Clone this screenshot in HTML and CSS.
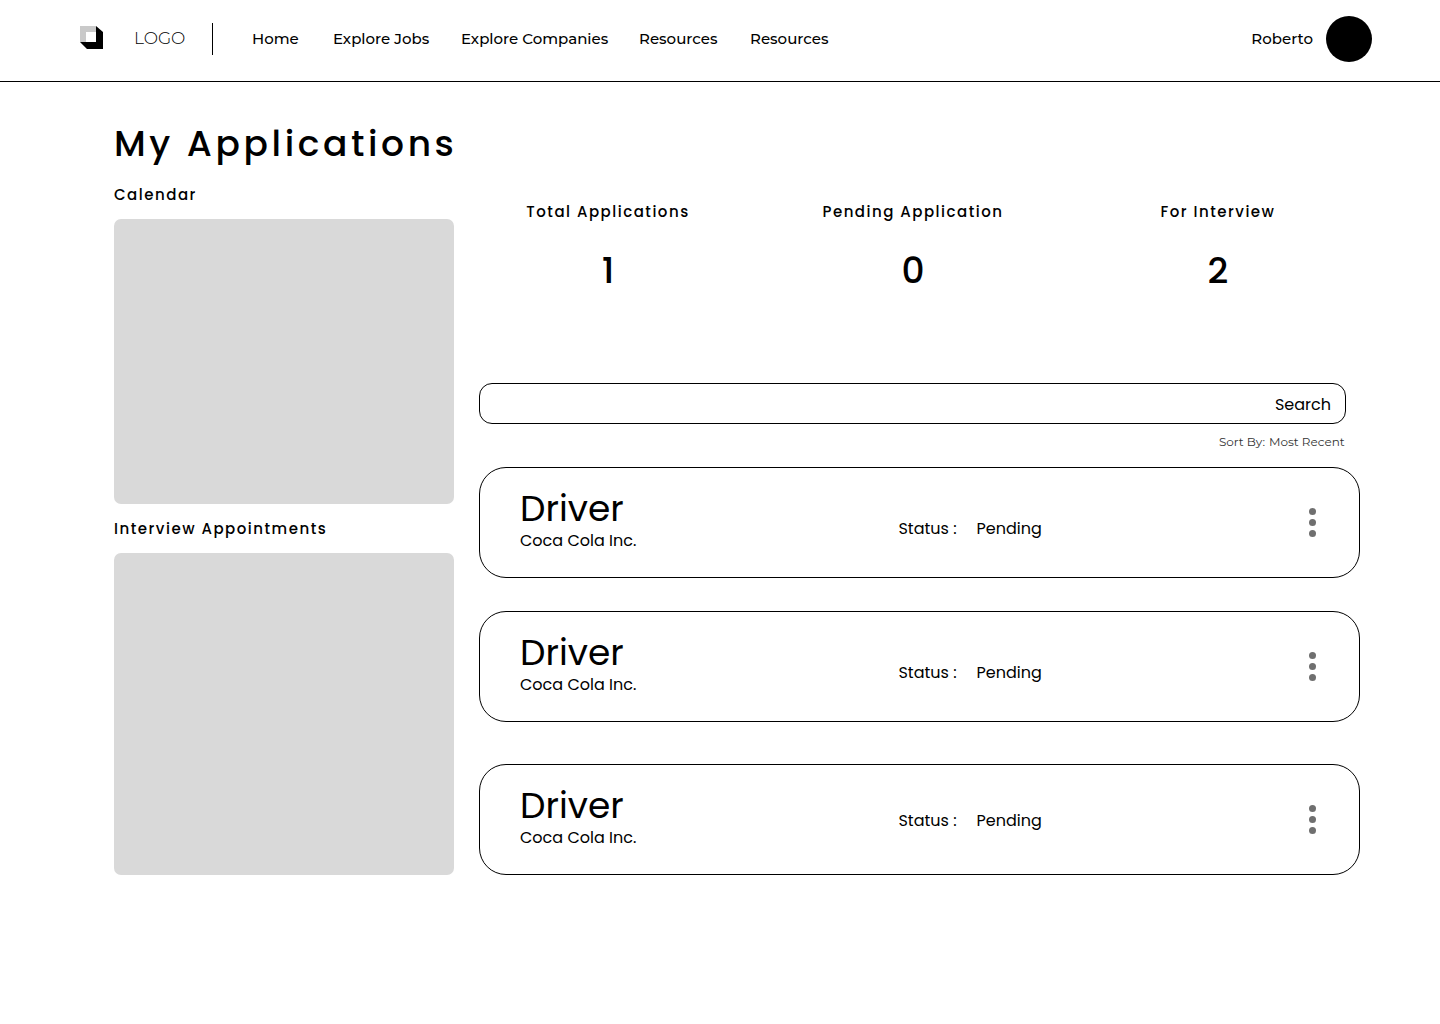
FILE: index.html
```html
<!DOCTYPE html>
<html lang="en">
<head>
<meta charset="utf-8">
<meta name="viewport" content="width=device-width, initial-scale=1">
<title>My Applications</title>
<link rel="stylesheet" href="styles.css">
</head>
<body>
<header class="topbar">
  <a class="brand" href="#">
    <svg class="brand-mark" viewBox="0 0 23 23" width="23" height="23" aria-hidden="true">
      <path fill="#c9c9c9" d="M0 0h16v6H6v10H0z"/>
      <path fill="#000" fill-rule="evenodd" d="M16 0l7 6v17H7l-7-7h16z"/>
    </svg>
    <span class="brand-name">LOGO</span>
  </a>
  <nav class="nav" aria-label="Main">
    <a href="#">Home</a>
    <a href="#">Explore Jobs</a>
    <a href="#">Explore Companies</a>
    <a href="#">Resources</a>
    <a href="#">Resources</a>
  </nav>
  <a class="user" href="#"><span>Roberto</span><span class="avatar"></span></a>
</header>
<main class="page">
  <h1 class="title">My Applications</h1>
  <div class="columns">
    <aside class="side">
      <h2 class="label">Calendar</h2>
      <div class="panel panel-calendar"></div>
      <h2 class="label">Interview Appointments</h2>
      <div class="panel panel-interviews"></div>
    </aside>
    <section class="content">
      <dl class="stats">
        <div class="stat"><dt class="label">Total Applications</dt><dd>1</dd></div>
        <div class="stat"><dt class="label">Pending Application</dt><dd>0</dd></div>
        <div class="stat"><dt class="label">For Interview</dt><dd>2</dd></div>
      </dl>
      <form class="search">
        <input class="search-input" type="search" aria-label="Search applications">
        <button class="search-button" type="submit">Search</button>
      </form>
      <div class="sort">
        <label for="sort">Sort By:</label>
        <select id="sort"><option>Most Recent</option></select>
      </div>
      <ul class="cards">
        <li class="card">
          <div class="role"><h3 class="job">Driver</h3><p class="company">Coca Cola Inc.</p></div>
          <p class="status"><span>Status :</span><span>Pending</span></p>
          <button class="more" type="button" aria-label="More options"><svg width="7" height="29" viewBox="0 0 7 29"><circle cx="3.5" cy="3.5" r="3.5"/><circle cx="3.5" cy="14.5" r="3.5"/><circle cx="3.5" cy="25.5" r="3.5"/></svg></button>
        </li>
        <li class="card">
          <div class="role"><h3 class="job">Driver</h3><p class="company">Coca Cola Inc.</p></div>
          <p class="status"><span>Status :</span><span>Pending</span></p>
          <button class="more" type="button" aria-label="More options"><svg width="7" height="29" viewBox="0 0 7 29"><circle cx="3.5" cy="3.5" r="3.5"/><circle cx="3.5" cy="14.5" r="3.5"/><circle cx="3.5" cy="25.5" r="3.5"/></svg></button>
        </li>
        <li class="card">
          <div class="role"><h3 class="job">Driver</h3><p class="company">Coca Cola Inc.</p></div>
          <p class="status"><span>Status :</span><span>Pending</span></p>
          <button class="more" type="button" aria-label="More options"><svg width="7" height="29" viewBox="0 0 7 29"><circle cx="3.5" cy="3.5" r="3.5"/><circle cx="3.5" cy="14.5" r="3.5"/><circle cx="3.5" cy="25.5" r="3.5"/></svg></button>
        </li>
      </ul>
    </section>
  </div>
</main>
</body>
</html>
```
FILE: styles.css
```css
* { box-sizing: border-box; }

body {
  margin: 0;
  background: #fff;
  color: #000;
  font-family: Poppins, Inter, sans-serif;
  font-size: 16px;
  line-height: 24px;
}

h1, h2, h3, p, dl, dd, ul { margin: 0; padding: 0; }
a { color: inherit; text-decoration: none; }
button, input, select {
  border: 0;
  padding: 0;
  background: none;
  color: inherit;
  font: inherit;
}

.topbar {
  display: flex;
  align-items: center;
  padding: 16px 68px 19px 80px;
  border-bottom: 1px solid #000;
  font-family: Montserrat, Inter, sans-serif;
  font-size: 15px;
  font-weight: 500;
}
.brand {
  display: flex;
  align-items: center;
  gap: 31px;
  width: 133px;
  height: 32px;
  padding-bottom: 3px;
  border-right: 1px solid #000;
}
.brand-name { font-size: 17px; font-weight: 300; }
.nav {
  display: grid;
  grid-template-columns: 81px 128px 178px 111px auto;
  margin-left: 39px;
}
.user {
  display: flex;
  align-items: center;
  gap: 13px;
  margin-left: auto;
}
.avatar {
  width: 46px;
  height: 46px;
  border-radius: 50%;
  background: #000;
}

.page { padding: 35px 80px 64px 114px; }
.title {
  margin-bottom: 11px;
  font-size: 36px;
  font-weight: 500;
  line-height: 54px;
  letter-spacing: 0.1em;
}
.columns {
  display: grid;
  grid-template-columns: 340px 1fr;
  column-gap: 25px;
}
.side {
  display: flex;
  flex-direction: column;
  gap: 12px;
}
.label {
  font-size: 15px;
  font-weight: 500;
  line-height: 25px;
  letter-spacing: 0.1em;
}
.panel { border-radius: 7px; background: #d9d9d9; }
.panel-calendar { height: 285px; }
.panel-interviews { height: 322px; }

.stats {
  display: grid;
  grid-template-columns: 258fr 352fr 258fr;
  padding: 17px 13px 0 0;
  text-align: center;
}
.stat dd {
  margin-top: 20px;
  font-size: 36px;
  font-weight: 500;
  line-height: 54px;
}
.search {
  display: flex;
  height: 41px;
  margin: 85px 14px 0 0;
  padding: 2px 14px 0;
  border: 1px solid #000;
  border-radius: 13px;
}
.search-input { flex: 1; min-width: 0; outline: 0; }
.sort {
  display: flex;
  justify-content: flex-end;
  gap: 4px;
  margin: 9px 15px 16px 0;
  color: #333;
  font-family: Montserrat, Inter, sans-serif;
  font-size: 12px;
  line-height: 18px;
}
.sort select { appearance: none; }

.cards { list-style: none; }
.card {
  display: grid;
  grid-template-columns: 377fr 409fr auto;
  align-items: center;
  height: 111px;
  margin-bottom: 33px;
  padding: 0 43px 0 40px;
  border: 1px solid #000;
  border-radius: 27px;
}
.card:last-child { margin: 42px 0 0; }
.role { padding-bottom: 4px; }
.job {
  font-size: 36px;
  font-weight: 400;
  line-height: 40px;
}
.status { display: flex; gap: 20px; padding-top: 12px; }
.card:last-child .status { padding-top: 2px; }
.more { display: flex; fill: #6f6f6f; }
```
